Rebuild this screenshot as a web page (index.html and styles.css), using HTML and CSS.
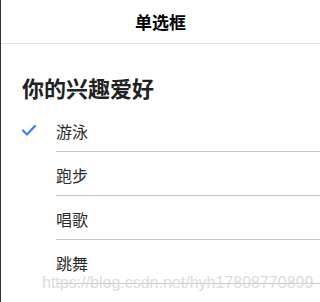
FILE: index.html
```html
<!DOCTYPE html>
<html lang="zh">
<head>
<meta charset="utf-8">
<link rel="stylesheet" href="styles.css">
</head>
<body>
<div class="page">
  <header class="toolbar"><h1 class="title">单选框</h1></header>
  <h2 class="heading">你的兴趣爱好</h2>
  <ul class="list">
    <li class="row">
      <span class="mark">
        <svg width="14" height="12" viewBox="0 0 14 12"><path d="M1 5.5 L5 9.5 L13 1" fill="none" stroke="#3880ff" stroke-width="2.2" stroke-linecap="round" stroke-linejoin="round"/></svg>
      </span>
      <span class="label">游泳</span>
    </li>
    <li class="row"><span class="mark"></span><span class="label">跑步</span></li>
    <li class="row"><span class="mark"></span><span class="label">唱歌</span></li>
    <li class="row"><span class="mark"></span><span class="label">跳舞</span></li>
  </ul>
  <div class="watermark">https://blog.csdn.net/hyh17808770899</div>
</div>
</body>
</html>
```
FILE: styles.css
```css
html, body {
  margin: 0;
  padding: 0;
  background: #fff;
}
.page {
  position: relative;
  width: 319px;
  height: 302px;
  border-left: 1px solid #333;
  overflow: hidden;
  font-family: "Noto Sans CJK SC", "Noto Sans", sans-serif;
  color: #000;
}
.toolbar {
  height: 43px;
  border-bottom: 1px solid #e4e4e4;
  display: flex;
  align-items: center;
  justify-content: center;
}
.title {
  margin: 0;
  font-size: 17px;
  font-weight: 700;
  line-height: 20px;
}
.heading {
  margin: 0;
  padding: 29px 0 6px 21px;
  font-size: 22px;
  line-height: 29px;
  font-weight: 700;
  color: #222;
}
.list {
  list-style: none;
  margin: 0;
  padding: 0;
}
.row {
  display: flex;
  height: 44px;
}
.mark {
  width: 55px;
  flex: none;
  display: flex;
  align-items: center;
  box-sizing: border-box;
}
.mark svg {
  margin-left: 21px;
  margin-top: 1px;
}
.label {
  flex: 1;
  display: flex;
  align-items: center;
  border-bottom: 1px solid #c8c7cc;
  font-size: 16px;
  color: #2a2a2a;
  padding-top: 2px;
}
.watermark {
  position: absolute;
  left: 41px;
  top: 276px;
  font-family: "Liberation Sans", Arial, sans-serif;
  font-size: 16px;
  line-height: 13px;
  color: #dcdcdc;
  white-space: nowrap;
}
```
